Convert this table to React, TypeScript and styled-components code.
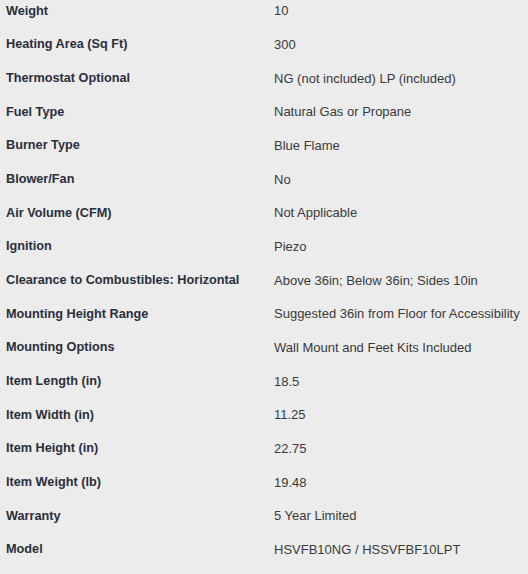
import React from "react";
import styled, { createGlobalStyle } from "styled-components";

const Global = createGlobalStyle`
  html, body { margin: 0; padding: 0; background: #ececec; }
  body { font-family: "Liberation Sans", Arial, sans-serif; overflow: hidden; }
`;

const Table = styled.div`
  display: grid;
  grid-template-columns: 268px 1fr;
  margin-top: -6px;
  background: #ececec;
`;

const Label = styled.div`
  height: 33.66px;
  box-sizing: border-box;
  padding: 0 6px;
  display: flex;
  align-items: center;
  font-size: 12.7px;
  font-weight: bold;
  color: #2b2e3c;
  white-space: nowrap;
`;

const Value = styled.div`
  height: 33.66px;
  box-sizing: border-box;
  padding: 0 6px;
  display: flex;
  align-items: center;
  font-size: 13px;
  color: #3a3a3a;
  white-space: nowrap;
`;

const rows: [string, string][] = [
  ["Weight", "10"],
  ["Heating Area (Sq Ft)", "300"],
  ["Thermostat Optional", "NG (not included) LP (included)"],
  ["Fuel Type", "Natural Gas or Propane"],
  ["Burner Type", "Blue Flame"],
  ["Blower/Fan", "No"],
  ["Air Volume (CFM)", "Not Applicable"],
  ["Ignition", "Piezo"],
  ["Clearance to Combustibles: Horizontal", "Above 36in; Below 36in; Sides 10in"],
  ["Mounting Height Range", "Suggested 36in from Floor for Accessibility"],
  ["Mounting Options", "Wall Mount and Feet Kits Included"],
  ["Item Length (in)", "18.5"],
  ["Item Width (in)", "11.25"],
  ["Item Height (in)", "22.75"],
  ["Item Weight (lb)", "19.48"],
  ["Warranty", "5 Year Limited"],
  ["Model", "HSVFB10NG / HSSVFBF10LPT"],
];

export default function App() {
  return (
    <>
      <Global />
      <Table>
        {rows.map(([k, v]) => (
          <React.Fragment key={k}>
            <Label>{k}</Label>
            <Value>{v}</Value>
          </React.Fragment>
        ))}
      </Table>
    </>
  );
}
